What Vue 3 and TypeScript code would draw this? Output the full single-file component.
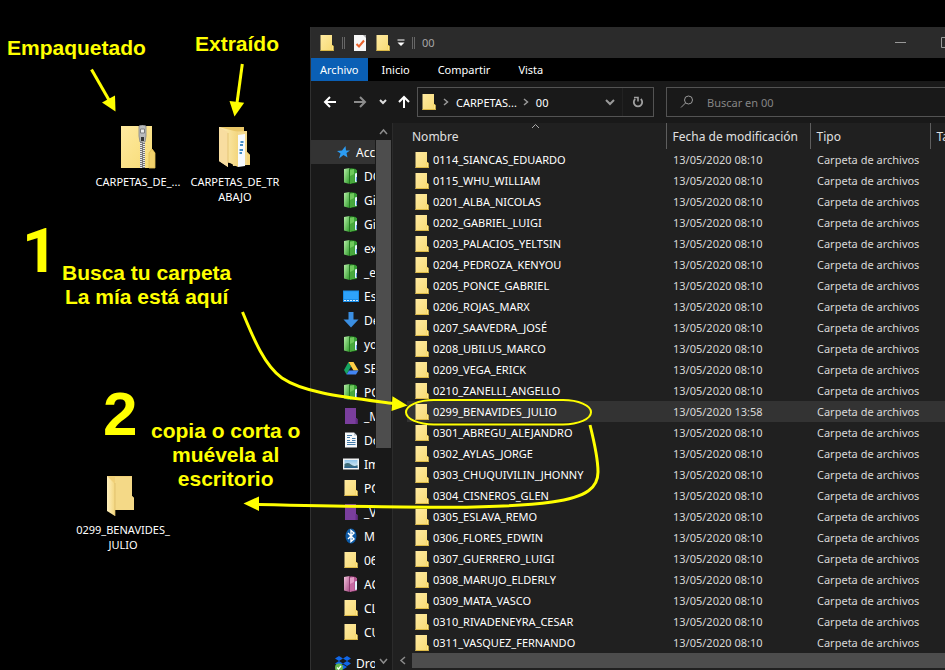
<script setup lang="ts">
interface FileRow {
  name: string
  date: string
}
interface PlaceItem {
  label: string
  icon: string
}

const names: string[] = [
  '0114_SIANCAS_EDUARDO',
  '0115_WHU_WILLIAM',
  '0201_ALBA_NICOLAS',
  '0202_GABRIEL_LUIGI',
  '0203_PALACIOS_YELTSIN',
  '0204_PEDROZA_KENYOU',
  '0205_PONCE_GABRIEL',
  '0206_ROJAS_MARX',
  '0207_SAAVEDRA_JOSÉ',
  '0208_UBILUS_MARCO',
  '0209_VEGA_ERICK',
  '0210_ZANELLI_ANGELLO',
  '0299_BENAVIDES_JULIO',
  '0301_ABREGU_ALEJANDRO',
  '0302_AYLAS_JORGE',
  '0303_CHUQUIVILIN_JHONNY',
  '0304_CISNEROS_GLEN',
  '0305_ESLAVA_REMO',
  '0306_FLORES_EDWIN',
  '0307_GUERRERO_LUIGI',
  '0308_MARUJO_ELDERLY',
  '0309_MATA_VASCO',
  '0310_RIVADENEYRA_CESAR',
  '0311_VASQUEZ_FERNANDO',
]
const selected = '0299_BENAVIDES_JULIO'
const files: FileRow[] = names.map((name) => ({
  name,
  date: name === selected ? '13/05/2020 13:58' : '13/05/2020 08:10',
}))

const places: PlaceItem[] = [
  { label: 'DO', icon: 'green' },
  { label: 'Git', icon: 'green' },
  { label: 'Git', icon: 'green' },
  { label: 'ex', icon: 'green' },
  { label: '_e', icon: 'green' },
  { label: 'Es', icon: 'desktop' },
  { label: 'De', icon: 'download' },
  { label: 'yo', icon: 'green' },
  { label: 'SE', icon: 'drive' },
  { label: 'PO', icon: 'green' },
  { label: '_M', icon: 'purple' },
  { label: 'Do', icon: 'document' },
  { label: 'Im', icon: 'picture' },
  { label: 'PO', icon: 'folder' },
  { label: '_V', icon: 'purple' },
  { label: 'MI', icon: 'bluetooth' },
  { label: '06', icon: 'folder' },
  { label: 'AC', icon: 'pink' },
  { label: 'CL', icon: 'folder' },
  { label: 'CU', icon: 'folder' },
]
</script>

<template>
  <main class="desktop">
    <svg class="sprites" aria-hidden="true">
      <defs>
        <linearGradient id="gFolder" x1="0" y1="0" x2="1" y2="1">
          <stop offset="0" stop-color="#ffeaa0" />
          <stop offset="1" stop-color="#f6da74" />
        </linearGradient>
        <linearGradient id="gFlap" x1="0" y1="0" x2="1" y2="0">
          <stop offset="0" stop-color="#fff0bd" />
          <stop offset="1" stop-color="#f3d67e" />
        </linearGradient>
        <linearGradient id="gGreen" x1="0" y1="0" x2="1" y2="1">
          <stop offset="0" stop-color="#b6f0a8" />
          <stop offset="1" stop-color="#2f9a2a" />
        </linearGradient>
        <linearGradient id="gPink" x1="0" y1="0" x2="1" y2="1">
          <stop offset="0" stop-color="#f3c3dc" />
          <stop offset="1" stop-color="#a84c86" />
        </linearGradient>
        <linearGradient id="gSky" x1="0" y1="0" x2="0" y2="1">
          <stop offset="0" stop-color="#8fc4ea" />
          <stop offset="1" stop-color="#e5f1f5" />
        </linearGradient>
      </defs>
      <symbol id="i-folder" viewBox="0 0 16 16">
        <path d="M1.500 0H13V10L14.500 11V16H1.500Z" fill="url(#gFolder)" />
        <path d="M12 16V11.500L13 10L14.500 11V16Z" fill="#f0cb4d" />
        <path d="M12.500 15.500V11.500L13.300 10.700L14 11.300V15.500Z" fill="#ffe78c" />
        <path d="M1.500 15.500H14.500" stroke="#dcb946" stroke-width="1" />
      </symbol>
      <symbol id="i-green" viewBox="0 0 16 16">
        <path d="M1 1L6.500 0V16L1 14.500Z" fill="url(#gGreen)" />
        <path d="M6 1L8 0L13 1V15L7 16L6 15Z" fill="#237a20" />
        <path d="M7 1.500L11 1V14.500L7 15.500Z" fill="#6fca5c" />
        <path d="M7 8L11 6V14.500L7 15.500Z" fill="#48a83d" />
        <path d="M11 1L14 2V14.500L11 15Z" fill="#3a9f38" />
        <path d="M12 5.500L14 5V13.500L12 14Z" fill="#e4f5ff" />
        <path d="M13 9H14V13H13Z" fill="#5a9fe0" />
      </symbol>
      <symbol id="i-pink" viewBox="0 0 16 16">
        <path d="M1 1L6.500 0V16L1 14.500Z" fill="url(#gPink)" />
        <path d="M6 1L8 0L13 1V15L7 16L6 15Z" fill="#8e3a70" />
        <path d="M7 1.500L11 1V14.500L7 15.500Z" fill="#e39cc6" />
        <path d="M7 8L11 6V14.500L7 15.500Z" fill="#c56aa2" />
        <path d="M11 1L14 2V14.500L11 15Z" fill="#b45a93" />
        <path d="M12 5.500L14 5V13.500L12 14Z" fill="#e4f5ff" />
      </symbol>
      <symbol id="i-purple" viewBox="0 0 16 16">
        <path d="M2 0H13V10L14.500 11V16H2Z" fill="#7a3e9d" />
        <path d="M12.500 16V11L13 10L14.500 11V16Z" fill="#652c87" />
      </symbol>
      <symbol id="i-desktop" viewBox="0 0 16 16">
        <path d="M0 2.500H16V14H0Z" fill="#1a8de8" />
        <path d="M1 3.500H15V11H1Z" fill="#2ea3fb" />
        <path d="M1 12.500H15" stroke="#d7efff" stroke-dasharray="2 1" />
      </symbol>
      <symbol id="i-download" viewBox="0 0 16 16">
        <path d="M5.500 0H10.500V7.500H15.500L8 15.500L.5 7.500H5.500Z" fill="#3b8fe2" />
      </symbol>
      <symbol id="i-drive" viewBox="0 0 16 16">
        <path d="M5.500 2L8 6.500L3.500 14.500L1 10Z" fill="#16a561" />
        <path d="M5.500 2H10.500L15.500 10.500H10.500Z" fill="#ffcf46" />
        <path d="M6 10.500H15.500L13 14.500H3.500Z" fill="#4285f4" />
      </symbol>
      <symbol id="i-document" viewBox="0 0 16 16">
        <path d="M2 .5H11L14 3.500V15.500H2Z" fill="#f6f8fa" />
        <path d="M11 .5V3.500H14Z" fill="#b7c1c9" />
        <path d="M4 3.500H9M4 5.500H7M9 6.500H12.500M4 8.500H7M9 8.500H12.500M4 10.500H12.500M4 12.500H12.500" stroke="#467ca9" />
      </symbol>
      <symbol id="i-picture" viewBox="0 0 16 16">
        <path d="M0 2.500H16V13.500H0Z" fill="#f1f3f4" />
        <path d="M1.500 4H14.500V12H1.500Z" fill="url(#gSky)" />
        <path d="M1.500 8Q5 6 8 8.500T14.500 9V12H1.500Z" fill="#3f6c78" />
        <path d="M1.500 10.500H14.500V12H1.500Z" fill="#2c6590" />
      </symbol>
      <symbol id="i-bluetooth" viewBox="0 0 16 16">
        <ellipse cx="8" cy="8" rx="5.500" ry="7.500" fill="#0c5aa6" />
        <path d="M5 5L11 11L8 13.500V2.500L11 5L5 11" fill="none" stroke="#fff" stroke-width="1.400" />
      </symbol>
    </svg>

    <section class="shortcut zip">
      <svg width="36" height="44" viewBox="0 0 36 44" aria-hidden="true">
        <path d="M1 1H32V24L35 28V43H1Z" fill="url(#gFolder)" />
        <path d="M29 43V28L32 24L35 28V43Z" fill="#f2d26c" stroke="#dfbc51" stroke-width=".8" />
        <path d="M22.500 15V43" stroke="#77777a" stroke-width="5" />
        <path d="M21 16V43" stroke="#e8e8e8" stroke-width="2" stroke-dasharray="1 1" />
        <path d="M24 17V43" stroke="#e8e8e8" stroke-width="2" stroke-dasharray="1 1" />
        <path d="M19 1Q22.500-1 26 1V11L25 17H20L19 11Z" fill="#b9bbbd" stroke="#808386" stroke-width=".8" />
        <path d="M20.500 4H24.500V8H20.500Z" fill="#eceded" stroke="#7b7d80" />
        <path d="M21 12H24V16H21Z" fill="#343638" />
      </svg>
      <span>CARPETAS_DE_...</span>
    </section>

    <section class="shortcut extracted">
      <svg width="34" height="44" viewBox="0 0 34 44" aria-hidden="true">
        <path d="M1 2H26V6H29V27L32 30V40H20L1 35Z" fill="#e9c768" />
        <path d="M11 7L29 6V40L15 41Z" fill="#f3d98f" />
        <path d="M20 10L27 9V41L20 42Z" fill="#f7fbff" />
        <path d="M22.500 17H25.500M22 20H25M21.500 25H25M21.500 28H24" stroke="#478fc7" stroke-width="2" />
        <path d="M1 2L20 7V42L10 37V42L1 36Z" fill="url(#gFlap)" />
        <path d="M1 2L10 7V42L1 36Z" fill="#f8dda0" />
        <path d="M10 8V38" stroke="#e5c577" />
        <path d="M29 27L32 30V40H29Z" fill="#f5d478" />
      </svg>
      <span>CARPETAS_DE_TR<br />ABAJO</span>
    </section>

    <section class="shortcut personal">
      <svg width="30" height="44" viewBox="0 0 30 44" aria-hidden="true">
        <path d="M1 1H26V21L28 23V35H1Z" fill="#f0d078" />
        <path d="M9 2H26V21L28 23V35H9Z" fill="#f4d987" />
        <path d="M1 1L7 7L9 9V41L1 36Z" fill="url(#gFlap)" />
        <path d="M9 8V41" stroke="#d9b967" stroke-width=".7" />
      </svg>
      <span>0299_BENAVIDES_<br />JULIO</span>
    </section>

    <section class="window">
      <header class="titlebar">
        <svg class="ic"><use href="#i-folder" /></svg>
        <i class="bar"></i>
        <svg class="ic check" viewBox="0 0 16 16" aria-hidden="true">
          <path d="M2 0H14V16H2Z" fill="#f7f7f7" />
          <path d="M11 0H14V3Z" fill="#aaa" />
          <path d="M4.500 9L7 11.500L12 5.500" fill="none" stroke="#e8622c" stroke-width="2" />
        </svg>
        <svg class="ic new"><use href="#i-folder" /></svg>
        <svg class="more" viewBox="0 0 8 8" aria-hidden="true">
          <path d="M.5 1H7.500" stroke="#fff" />
          <path d="M.5 3.500H7.500L4 7Z" fill="#fff" />
        </svg>
        <i class="bar"></i>
        <span class="caption">00</span>
        <button class="sys" type="button" aria-label="Minimizar">
          <svg width="11" height="11" viewBox="0 0 11 11"><path d="M0 5.500H11" stroke="#999" /></svg>
        </button>
        <button class="sys" type="button" aria-label="Maximizar">
          <svg width="11" height="11" viewBox="0 0 11 11"><path d="M.5 .5H10.500V10.500H.5Z" fill="none" stroke="#999" /></svg>
        </button>
      </header>

      <nav class="tabs">
        <button type="button" class="active">Archivo</button>
        <button type="button">Inicio</button>
        <button type="button">Compartir</button>
        <button type="button">Vista</button>
      </nav>

      <div class="toolbar">
        <div class="history">
          <button type="button" aria-label="Atrás">
            <svg width="14" height="14" viewBox="0 0 14 14"><path d="M13 7H2M7 2L2 7L7 12" fill="none" stroke="#fff" stroke-width="2" /></svg>
          </button>
          <button type="button" aria-label="Adelante">
            <svg width="14" height="14" viewBox="0 0 14 14"><path d="M1 7H12M7 2L12 7L7 12" fill="none" stroke="#8c8c8c" stroke-width="2" /></svg>
          </button>
          <button type="button" class="narrow" aria-label="Recientes">
            <svg width="8" height="8" viewBox="0 0 8 8"><path d="M1 2L4 5L7 2" fill="none" stroke="#ddd" stroke-width="2" /></svg>
          </button>
          <button type="button" class="up" aria-label="Subir">
            <svg width="14" height="14" viewBox="0 0 14 14"><path d="M7 13V2M2 7L7 2L12 7" fill="none" stroke="#fff" stroke-width="2" /></svg>
          </button>
        </div>
        <div class="address">
          <svg class="ic"><use href="#i-folder" /></svg>
          <svg class="sep" viewBox="0 0 6 8"><path d="M1 1L4.500 4L1 7" fill="none" stroke="#999" stroke-width="1.500" /></svg>
          <a href="#">CARPETAS...</a>
          <svg class="sep" viewBox="0 0 6 8"><path d="M1 1L4.500 4L1 7" fill="none" stroke="#999" stroke-width="1.500" /></svg>
          <a href="#">00</a>
          <button type="button" class="drop" aria-label="Ubicaciones anteriores">
            <svg width="10" height="8" viewBox="0 0 10 8"><path d="M1 2L5 6L9 2" fill="none" stroke="#999" stroke-width="2" /></svg>
          </button>
          <button type="button" class="refresh" aria-label="Actualizar">
            <svg width="12" height="12" viewBox="0 0 12 12">
              <path d="M8.800 3A4.200 4.200 0 1 1 3.200 3" fill="none" stroke="#a0a0a0" stroke-width="1.800" />
              <path d="M2 1.500H6V5.500" fill="none" stroke="#a0a0a0" stroke-width="1.600" />
            </svg>
          </button>
        </div>
        <label class="search">
          <svg width="14" height="14" viewBox="0 0 14 14">
            <circle cx="8.500" cy="5" r="4" fill="none" stroke="#999" />
            <path d="M5.500 8L1 12.500" stroke="#999" />
          </svg>
          <input type="search" placeholder="Buscar en 00" aria-label="Buscar en 00" />
        </label>
      </div>

      <div class="body">
        <aside class="side">
          <nav class="places">
            <a href="#" class="place root current">
              <svg class="ic" viewBox="0 0 16 16">
                <path d="M10.500 2L11 6.500H15L11.500 9L12.500 13.500L8.500 11L4 14.500L5.500 9.500L2 7L7 6.500Z" fill="#2c9cf2" />
              </svg>
              <span>Acc</span>
            </a>
            <a v-for="(p, i) in places" :key="i" href="#" class="place">
              <svg class="ic"><use :href="'#i-' + p.icon" /></svg>
              <span>{{ p.label }}</span>
            </a>
            <a href="#" class="place root last">
              <svg class="ic" viewBox="0 0 16 16">
                <path d="M4 1L8 3.500L4 6L0 3.500ZM12 1L16 3.500L12 6L8 3.500ZM4 6L8 8.500L4 11L0 8.500ZM12 6L16 8.500L12 11L8 8.500ZM8 9.500L12 12L8 14.500L4 12Z" fill="#1067e8" />
                <circle cx="4" cy="12.500" r="4" fill="#65b74f" />
                <path d="M2 12.500L3.500 14L6 11" fill="none" stroke="#fff" stroke-width="1.300" />
              </svg>
              <span>Dro</span>
            </a>
          </nav>
          <div class="vscroll">
            <svg width="9" height="8" viewBox="0 0 9 8"><path d="M1 6L4.500 2L8 6" fill="none" stroke="#8c8c8c" stroke-width="1.500" /></svg>
            <div class="track"><div class="thumb"></div></div>
            <svg width="9" height="8" viewBox="0 0 9 8"><path d="M1 2L4.500 6L8 2" fill="none" stroke="#8c8c8c" stroke-width="1.500" /></svg>
          </div>
        </aside>

        <section class="content">
          <table>
            <colgroup>
              <col class="c-name" />
              <col class="c-date" />
              <col class="c-type" />
              <col />
            </colgroup>
            <thead>
              <tr>
                <th class="sorted">
                  Nombre
                  <svg class="caret" width="9" height="6" viewBox="0 0 9 6"><path d="M1 5L4.500 1.500L8 5" fill="none" stroke="#aaa" /></svg>
                </th>
                <th>Fecha de modificación</th>
                <th>Tipo</th>
                <th>Tamaño</th>
              </tr>
            </thead>
            <tbody>
              <tr v-for="f in files" :key="f.name" :class="{ selected: f.name === selected }">
                <td>
                  <div class="file">
                    <svg class="ic"><use href="#i-folder" /></svg>
                    <span>{{ f.name }}</span>
                  </div>
                </td>
                <td>{{ f.date }}</td>
                <td>Carpeta de archivos</td>
                <td></td>
              </tr>
            </tbody>
          </table>
          <div class="hscroll">
            <svg width="8" height="9" viewBox="0 0 8 9"><path d="M6 1L2 4.500L6 8" fill="none" stroke="#8c8c8c" stroke-width="1.500" /></svg>
            <div class="hthumb"></div>
          </div>
        </section>
      </div>
    </section>

    <p class="note packed">Empaquetado</p>
    <p class="note unpacked">Extraído</p>
    <p class="note find">Busca tu carpeta<br />La mía está aquí</p>
    <p class="note copy">copia o corta o<br />muévela al<br />escritorio</p>
    <p class="step one">1</p>
    <p class="step two">2</p>

    <svg class="ink" width="945" height="670" viewBox="0 0 945 670" aria-hidden="true">
      <g fill="none" stroke="#ff0" stroke-width="3">
        <path d="M91.500 69.500L109 100" />
        <path d="M242.300 64L237 103" />
        <path d="M242.500 312C254 340 265 366 282 378C304 393 344 397 394 403.500" />
        <path d="M590 425C595 445 598 460 598 472C598 487 588 497 552 502C500 509 430 508 258 504.500" />
        <rect x="406" y="400" width="185" height="24.500" rx="28" ry="12.200" stroke-width="2" />
      </g>
      <g fill="#ff0">
        <path d="M102 102.500L115 95.500L115.500 111.500Z" />
        <path d="M229.500 101L244.200 102.800L234.500 116.500Z" />
        <path d="M392.500 396.300L407.500 405.500L391.500 411Z" />
        <path d="M259 496.500L243.500 503.600L259 511Z" />
      </g>
    </svg>
  </main>
</template>

<style>
body {
  background: #000;
}
</style>

<style scoped>
.desktop {
  position: relative;
  min-height: 100vh;
  overflow: hidden;
  background: #000;
  color: #fff;
  font-family: 'Noto Sans', 'Open Sans', sans-serif;
  font-size: 12px;
  line-height: 15px;
}
.sprites {
  position: absolute;
  width: 0;
  height: 0;
}
button {
  display: flex;
  align-items: center;
  justify-content: center;
  border: 0;
  padding: 0;
  background: none;
  color: inherit;
  font: inherit;
}
a {
  color: inherit;
  text-decoration: none;
}
svg {
  flex: none;
}
.ic {
  width: 16px;
  height: 16px;
}

/* desktop shortcuts */
.shortcut {
  position: absolute;
  display: flex;
  flex-direction: column;
  align-items: center;
  gap: 5px;
  width: 96px;
  text-align: center;
  font-size: 11px;
}
.zip {
  left: 90px;
  top: 125px;
}
.extracted {
  left: 187px;
  top: 125px;
}
.personal {
  left: 75px;
  top: 475px;
  gap: 3px;
}
.personal svg {
  margin-right: 4px;
}

/* explorer window */
.window {
  position: absolute;
  inset: 27px -70px 0 310px;
  display: flex;
  flex-direction: column;
  border-left: 1px solid #303030;
  background: #191919;
}
.titlebar {
  display: flex;
  align-items: center;
  height: 31px;
  padding-left: 8px;
  background: #2b2b2b;
  color: #a6a6a6;
}
.bar {
  width: 1px;
  height: 12px;
  margin: 0 7px;
  border: solid #666;
  border-width: 0 1px;
}
.check {
  margin-right: 7px;
}
.more {
  width: 8px;
  height: 8px;
  margin-left: 6px;
}
.caption {
  flex: 1;
  font-size: 11px;
}
.sys {
  width: 46px;
  height: 31px;
}
.sys:last-child {
  margin-right: 46px;
}
.tabs {
  display: flex;
  height: 23px;
  background: #000;
  font-size: 11px;
}
.tabs button {
  padding: 0 14px;
}
.tabs .active {
  padding: 0 9px;
  background: #0a5fb5;
}
.toolbar {
  display: flex;
  align-items: center;
  height: 42px;
  gap: 12px;
}
.history {
  display: flex;
  align-items: center;
  width: 94px;
  padding-left: 12px;
  box-sizing: border-box;
}
.history button {
  width: 14px;
  height: 28px;
  margin-right: 16px;
}
.history .narrow {
  width: 8px;
  margin: 0 10px 0 -4px;
}
.history .up {
  margin: 0;
}
.address {
  display: flex;
  align-items: center;
  width: 237px;
  height: 30px;
  box-sizing: border-box;
  padding-left: 3px;
  border: 1px solid #535353;
  font-size: 11px;
}
.sep {
  width: 6px;
  height: 8px;
  margin: 0 7px 0 6px;
}
.drop {
  width: 26px;
  height: 28px;
  margin-left: auto;
  border-right: 1px solid #222;
}
.refresh {
  width: 30px;
  height: 28px;
}
.search {
  display: flex;
  flex: 1;
  align-items: center;
  gap: 13px;
  height: 30px;
  box-sizing: border-box;
  padding-left: 13px;
  border: 1px solid #535353;
}
.search input {
  flex: 1;
  min-width: 0;
  border: 0;
  padding: 0;
  outline: 0;
  background: none;
  color: #fff;
  font: inherit;
  font-size: 11px;
}
.search input::placeholder {
  color: #858585;
  opacity: 1;
}

.body {
  display: flex;
  flex: 1;
  min-height: 0;
}
.side {
  display: flex;
  width: 81px;
  border-right: 1px solid #2b2b2b;
}
.places {
  display: flex;
  flex: 1;
  flex-direction: column;
  min-width: 0;
  overflow: hidden;
  padding-top: 17px;
}
.place {
  display: flex;
  flex: none;
  align-items: center;
  gap: 5px;
  height: 24px;
  padding-left: 32px;
  overflow: hidden;
  white-space: nowrap;
}
.root {
  padding-left: 24px;
}
.current {
  background: #333;
}
.last {
  margin-top: 7px;
}
.vscroll {
  display: flex;
  flex-direction: column;
  align-items: center;
  width: 17px;
  padding: 5px 0;
}
.track {
  flex: 1;
  width: 15px;
  margin: 4px 0;
}
.thumb {
  height: 60%;
  background: #4d4d4d;
}
.content {
  display: flex;
  flex: 1;
  flex-direction: column;
  min-width: 0;
  overflow: hidden;
  background: #202020;
}
table {
  width: calc(100% - 14px);
  margin-left: 14px;
  border-collapse: collapse;
  table-layout: fixed;
  font-size: 11px;
}
.c-name {
  width: 259px;
}
.c-date {
  width: 144px;
}
.c-type {
  width: 120px;
}
th {
  position: relative;
  height: 26px;
  box-sizing: border-box;
  padding: 0 6px;
  border-left: 1px solid #5e5e5e;
  text-align: left;
  font-size: 12px;
  font-weight: 400;
  color: #e0e0e0;
}
th:first-child {
  padding-left: 5px;
  border-left: 0;
}
.caret {
  position: absolute;
  top: 0;
  left: calc(50% - 5px);
}
td {
  height: 21px;
  padding: 0 7px;
  white-space: nowrap;
  color: #d8d8d8;
}
.file {
  display: flex;
  align-items: center;
  gap: 3px;
  color: #fff;
}
.selected {
  background: #333;
}
.hscroll {
  display: flex;
  align-items: center;
  gap: 5px;
  height: 15px;
  padding-left: 6px;
}
.hthumb {
  flex: 1;
  height: 15px;
  background: #4d4d4d;
}

/* yellow annotations */
.note,
.step {
  position: absolute;
  margin: 0;
  color: #ff0;
  font-family: 'Liberation Sans', Arial, sans-serif;
  font-weight: 700;
  text-align: center;
  white-space: nowrap;
}
.note {
  font-size: 21px;
  line-height: 24px;
}
.step {
  font-size: 62px;
  line-height: 62px;
}
.packed {
  left: 7px;
  top: 36px;
}
.unpacked {
  left: 195px;
  top: 32px;
}
.find {
  left: 62px;
  top: 261px;
}
.copy {
  left: 151px;
  top: 419px;
}
.one {
  left: 22px;
  top: 220px;
  font-family: Roboto, Arial, sans-serif;
}
.two {
  left: 103px;
  top: 383px;
}
.ink {
  position: absolute;
  left: 0;
  top: 0;
  pointer-events: none;
}
</style>
